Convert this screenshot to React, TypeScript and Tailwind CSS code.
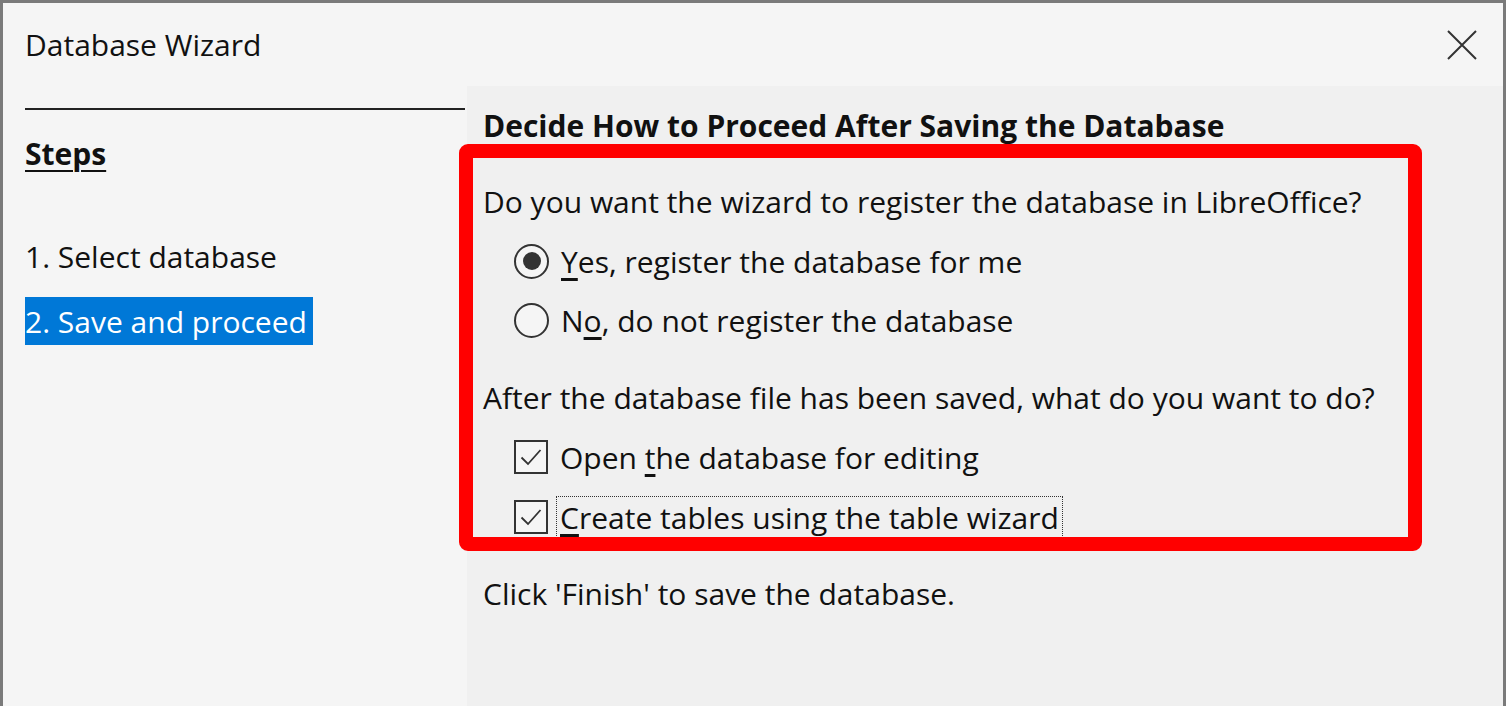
import React from 'react'

const font = { fontFamily: '"Open Sans", "Noto Sans", "Liberation Sans", sans-serif' }

function Radio({ checked }: { checked?: boolean }) {
  return (
    <span className="flex h-[35px] w-[35px] shrink-0 items-center justify-center rounded-full border-[2.5px] border-[#333] bg-[#f5f5f5]">
      {checked && <span className="h-[18px] w-[18px] rounded-full bg-[#333]" />}
    </span>
  )
}

function Check() {
  return (
    <span className="flex h-[34px] w-[34px] shrink-0 items-center justify-center border-2 border-[#333] bg-[#f5f5f5]">
      <svg width="24" height="24" viewBox="0 0 24 24" fill="none">
        <path d="M2.5 12.5 L9 19 L21.5 5" stroke="#333" strokeWidth="1.8" />
      </svg>
    </span>
  )
}

export default function App() {
  return (
    <div
      className="relative flex h-[706px] w-[1506px] flex-col overflow-hidden border-l-[3px] border-r-[3px] border-t-[3px] border-[#7a7a7a] bg-[#f5f5f5] text-[30px] text-[#111]"
      style={font}
    >
      {/* title bar */}
      <div className="flex h-[83px] shrink-0 items-center justify-between pl-[22px] pr-[26px]">
        <span className="leading-none">Database Wizard</span>
        <svg width="30" height="30" viewBox="0 0 30 30">
          <path d="M1 1 L29 29 M29 1 L1 29" stroke="#333" strokeWidth="2" />
        </svg>
      </div>

      <div className="flex flex-1">
        {/* steps */}
        <div className="flex w-[464px] shrink-0 flex-col pl-[22px] pr-[2px]">
          <div className="mt-[22px] h-[2px] bg-[#222]" />
          <div className="mt-[20px] flex h-[46px] items-center font-bold underline decoration-2 underline-offset-[5px]">
            Steps
          </div>
          <div className="mt-[57px] flex h-[46px] items-center">1. Select database</div>
          <div className="mt-[18px] flex h-[48px] w-[288px] items-center whitespace-nowrap bg-[#0078d7] text-white">
            2. Save and proceed
          </div>
        </div>

        {/* page */}
        <div className="flex flex-1 flex-col whitespace-nowrap bg-[#f0f0f0] pl-[16px]">
          <div className="mt-[9px] flex h-[60px] items-center font-bold">
            Decide How to Proceed After Saving the Database
          </div>
          <div className="mt-[16px] flex h-[60px] items-center">
            Do you want the wizard to register the database in LibreOffice?
          </div>
          <div className="flex h-[60px] items-center gap-[12px] pl-[31px]">
            <Radio checked />
            <span>
              <span className="underline underline-offset-[5px]">Y</span>es, register the database for me
            </span>
          </div>
          <div className="flex h-[59px] items-center gap-[12px] pl-[31px]">
            <Radio />
            <span>
              N<span className="underline underline-offset-[5px]">o</span>, do not register the database
            </span>
          </div>
          <div className="mt-[17px] flex h-[60px] items-center">
            After the database file has been saved, what do you want to do?
          </div>
          <div className="flex h-[60px] items-center gap-[12px] pl-[31px]">
            <Check />
            <span>
              Open <span className="underline underline-offset-[5px]">t</span>he database for editing
            </span>
          </div>
          <div className="flex h-[60px] items-center gap-[8px] pl-[31px]">
            <Check />
            <span className="flex h-[42px] items-center border border-dotted border-[#333] px-[3px]">
              <span>
                <span className="underline underline-offset-[5px]">C</span>reate tables using the table wizard
              </span>
            </span>
          </div>
          <div className="mt-[16px] flex h-[60px] items-center">Click 'Finish' to save the database.</div>
        </div>
      </div>

      {/* red highlight annotation */}
      <div className="pointer-events-none absolute left-[456px] top-[141px] h-[407px] w-[963px] rounded-[9px] border-[14px] border-[#ff0000]" />
    </div>
  )
}
